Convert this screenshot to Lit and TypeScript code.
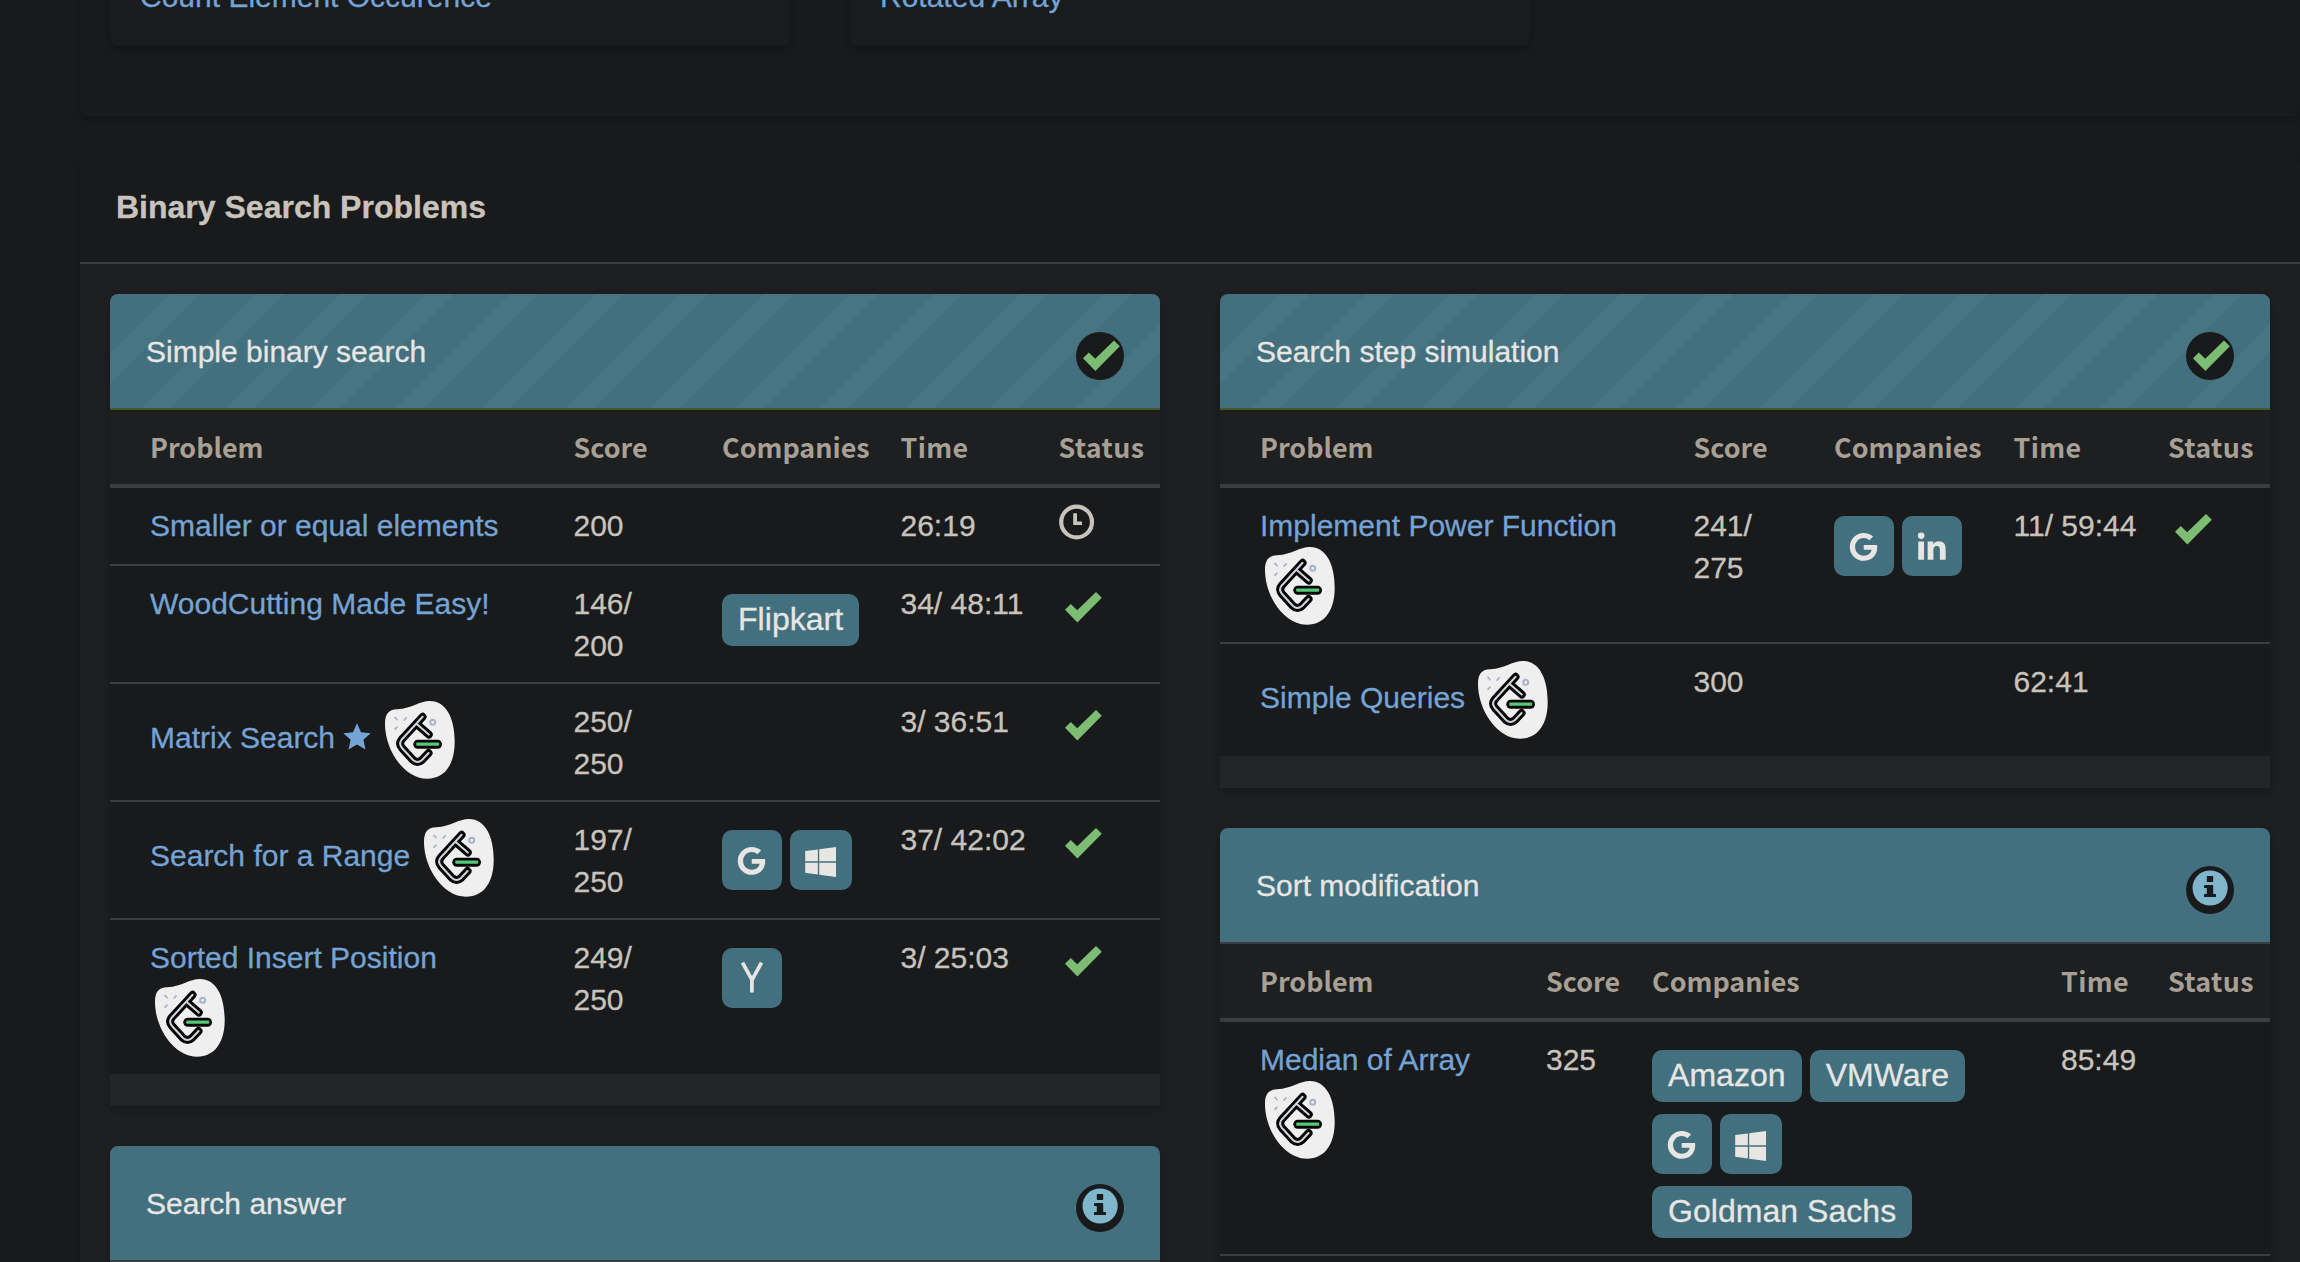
import { LitElement, html, svg, css, nothing } from "lit";
import { customElement, property } from "lit/decorators.js";
import { classMap } from "lit/directives/class-map.js";

type Status = "done" | "clock" | "";

interface Problem {
  name: string;
  star?: boolean;
  logo?: boolean;
  score: string;
  companies?: string[];
  time: string;
  status: Status;
}

interface Topic {
  title: string;
  complete: boolean;
  layout: "a" | "b" | "c";
  footer?: boolean;
  continues?: boolean;
  problems: Problem[];
}

const LEFT: Topic[] = [
  {
    title: "Simple binary search",
    complete: true,
    layout: "a",
    footer: true,
    problems: [
      { name: "Smaller or equal elements", score: "200", time: "26:19", status: "clock" },
      { name: "WoodCutting Made Easy!", score: "146/ 200", companies: ["Flipkart"], time: "34/ 48:11", status: "done" },
      { name: "Matrix Search", star: true, logo: true, score: "250/ 250", time: "3/ 36:51", status: "done" },
      { name: "Search for a Range", logo: true, score: "197/ 250", companies: ["@google", "@windows"], time: "37/ 42:02", status: "done" },
      { name: "Sorted Insert Position", logo: true, score: "249/ 250", companies: ["@ycomb"], time: "3/ 25:03", status: "done" },
    ],
  },
  { title: "Search answer", complete: false, layout: "a", problems: [] },
];

const RIGHT: Topic[] = [
  {
    title: "Search step simulation",
    complete: true,
    layout: "b",
    footer: true,
    problems: [
      { name: "Implement Power Function", logo: true, score: "241/ 275", companies: ["@google", "@linkedin"], time: "11/ 59:44", status: "done" },
      { name: "Simple Queries", logo: true, score: "300", time: "62:41", status: "" },
    ],
  },
  {
    title: "Sort modification",
    complete: false,
    layout: "c",
    continues: true,
    problems: [
      { name: "Median of Array", logo: true, score: "325", companies: ["Amazon", "VMWare", "@google", "@windows", "Goldman Sachs"], time: "85:49", status: "" },
    ],
  },
];

const TICK = "0,17.8 5.8,12 12.2,18.2 31,0 36.8,5.8 12.4,30.4";

const BRANDS: Record<string, unknown> = {
  "@google": svg`<path transform="translate(15.8 16.5) scale(.0562)" d="M488 261.8C488 403.3 391.1 504 248 504 110.8 504 0 393.2 0 256S110.8 8 248 8c66.8 0 123 24.5 166.3 64.9l-67.5 64.9C258.5 52.6 94.3 116.6 94.3 256c0 86.5 69.1 156.6 153.7 156.6 98.2 0 135-70.4 140.8-106.9H248v-85.3h236.1c2.3 12.7 3.9 24.9 3.9 41.4z"/>`,
  "@windows": svg`<path transform="translate(15.2 14.8) scale(.0688 .067)" d="M0 93.7l183.6-25.3v177.4H0V93.7zm0 324.6l183.6 25.3V268.4H0v149.9zm203.8 28L448 480V268.4H203.8v177.9zm0-380.6v180.1H448V32L203.8 65.7z"/>`,
  "@linkedin": svg`<path transform="translate(15.8 16.6) scale(.0622 .0605)" d="M100.28 448H7.4V148.9h92.88zM53.79 108.1C24.09 108.1 0 83.5 0 53.8a53.79 53.79 0 0 1 107.58 0c0 29.7-24.1 54.3-53.79 54.3zM447.9 448h-92.68V302.4c0-34.7-.7-79.2-48.29-79.2-48.29 0-55.69 37.7-55.69 76.7V448h-92.78V148.9h89.08v40.8h1.3c12.4-23.5 42.69-48.3 87.88-48.3 94 0 111.28 61.9 111.28 142.3V448z"/>`,
  "@ycomb": svg`<path d="M20.5 14.6L30 31.8L39.5 14.6M29.9 31V44.4" fill="none" stroke="currentColor" stroke-width="3.7"/>`,
};

@customElement("topic-card")
export class TopicCard extends LitElement {
  @property({ attribute: false }) topic!: Topic;

  static styles = css`
    :host {
      display: block;
      border-radius: 8px 8px 0 0;
      background: #181a1b;
      box-shadow: 0 4px 8px rgba(0, 0, 0, 0.24);
    }
    .head {
      display: flex;
      justify-content: space-between;
      height: 114px;
      box-sizing: border-box;
      padding: 36.5px 36px 0;
      border-radius: 8px 8px 0 0;
      background: #42707f;
      color: #e8e6e3;
    }
    .head.complete {
      background: repeating-linear-gradient(-45deg, #42707f 0 40px, #487582 40px 60px);
    }
    .rule {
      height: 2px;
      background: #3b3d40;
    }
    .rule.complete {
      background: #47592b;
    }
    .badge {
      display: block;
      width: 48px;
      height: 48px;
      margin-top: 1.5px;
    }
    .cols {
      display: grid;
      padding-left: 40px;
    }
    .a {
      grid-template-columns: 423.5px 148.5px 178.5px 158px 1fr;
    }
    .b {
      grid-template-columns: 433.5px 140.5px 179.5px 154.5px 1fr;
    }
    .c {
      grid-template-columns: 286px 106px 409px 107px 1fr;
    }
    .labels {
      height: 74px;
      box-sizing: border-box;
      padding-top: 16px;
      background: #1d1f20;
      color: #a8a095;
      font: 700 26.9px/42px "Noto Sans CJK SC", sans-serif;
      -webkit-text-stroke: 0;
    }
    .labels span:last-child,
    .labels span:nth-child(4) {
      letter-spacing: 0.35px;
    }
    .thick {
      height: 4px;
      background: #3b3d40;
    }
    .row + .row {
      border-top: 2px solid #3b3d40;
    }
    .row {
      padding-top: 16px;
      padding-bottom: 16px;
    }
    .row.blank {
      height: 90px;
    }
    .name {
      padding: 1px 56px 0 0;
      color: #74a3d6;
    }
    .star {
      width: 28px;
      height: 27px;
      vertical-align: -2px;
    }
    .logo {
      width: 80px;
      height: 80px;
      margin-top: -1px;
      vertical-align: middle;
    }
    .score {
      margin-bottom: -1px;
      padding: 1px 38px 0 0;
    }
    .tags {
      display: flex;
      flex-wrap: wrap;
      align-content: flex-start;
      align-items: flex-start;
      gap: 12px 8px;
      padding: 12px 32px 0 0;
    }
    .tag {
      height: 52px;
      box-sizing: border-box;
      padding: 0 16px;
      border-radius: 10px;
      background: #42707f;
      color: #e8e6e3;
      font-size: 32px;
      line-height: 50px;
      letter-spacing: 0.04px;
      white-space: nowrap;
    }
    .tag.brand {
      width: 60px;
      height: 60px;
      padding: 0;
    }
    .tag.wide {
      width: 62px;
    }
    .tag svg {
      display: block;
      width: 100%;
      height: 100%;
      fill: currentColor;
    }
    .time {
      padding-top: 1px;
      white-space: nowrap;
    }
    .clock {
      display: block;
      width: 36px;
      height: 44px;
    }
    .tick {
      display: block;
      width: 37px;
      height: 31px;
      margin: 10.2px 0 0 6.6px;
    }
    .foot {
      height: 32px;
      background: #222425;
    }
  `;

  private badge(complete: boolean) {
    return html`<svg class="badge" viewBox="0 0 48 48">
      <circle cx="24" cy="24" r="24" fill="#181a1b" />
      ${complete
        ? svg`<polygon transform="translate(7 8.5)" points=${TICK} fill="#7dbd73"/>`
        : svg`<circle cx="24.1" cy="22" r="17.6" fill="#7fb6cb"/>
            <path fill="#181a1b" d="M21.5 10h5a.7.7 0 0 1 .7.7v4.6a.7.7 0 0 1-.7.7h-5a.7.7 0 0 1-.7-.7v-4.6a.7.7 0 0 1 .7-.7zM18.7 19h7.8a.7.7 0 0 1 .7.7V28h2.1a.7.7 0 0 1 .7.7v1.7a.7.7 0 0 1-.7.7H18.7a.7.7 0 0 1-.7-.7v-1.7a.7.7 0 0 1 .7-.7h2.1v-5.900h-2.1a.7.7 0 0 1-.7-.7v-1.400a.7.7 0 0 1 .7-.7z"/>`}
    </svg>`;
  }

  private logo() {
    const band = "M42.6 16.8L22 39.2Q18.2 43.6 22 48L33 60Q37.5 64 42 60L48.6 53M36.4 23.8L48.8 34.6";
    return html`<svg class="logo" viewBox="0 0 80 80" fill="none" stroke-linecap="round" stroke-linejoin="round">
      <path fill="#efeff0" d="M5 24C5 14 8.500 9.800 17 9.300C33 8.300 39 1 50 1C66 1 74.700 18 74.700 42C74.700 64 65 78.700 47 78.700C24 78.700 5 50 5 24Z" />
      <path d=${band} stroke="#050505" stroke-width="7.900" />
      <path d=${band} stroke="#cfd3db" stroke-width="2" />
      <rect x="33.300" y="39.700" width="28.700" height="9" rx="4.500" fill="#050505" />
      <rect x="36.200" y="42.600" width="23" height="3.200" rx="1" fill="#57c878" />
      <circle cx="52.700" cy="22.300" r="2.500" stroke="#a9b3c6" stroke-width="2" />
      <path d="M15 17.500L17 19.600M26.100 17.900L24.200 20M17 27.200L15.100 29.200" stroke="#a9b3c6" stroke-width="1.800" />
    </svg>`;
  }

  private star() {
    return html`&nbsp;<svg class="star" viewBox="0 0 28 27">
        <path fill="currentColor" d="M14 .3L18 9.200L27.700 10.200L20.400 16.700L22.500 26.400L14 21.500L5.500 26.400L7.600 16.700L.3 10.200L10 9.200Z" />
      </svg>`;
  }

  private status(s: Status) {
    if (s === "clock")
      return html`<svg class="clock" viewBox="0 0 36 44">
        <circle cx="17.600" cy="18" r="15.400" fill="none" stroke="#c8c3bc" stroke-width="4.200" />
        <path fill="#c8c3bc" d="M14.200 9.200h3.800v8.300h5v3.600h-8.800z" />
      </svg>`;
    if (s === "done")
      return html`<svg class="tick" viewBox="0 0 37 31"><polygon points=${TICK} fill="#7dbd73" /></svg>`;
    return nothing;
  }

  private tag(c: string) {
    return c.startsWith("@")
      ? html`<span class=${classMap({ tag: true, brand: true, wide: c === "@windows" })}>
          <svg viewBox=${c === "@windows" ? "0 0 62 60" : "0 0 60 60"}>${BRANDS[c]}</svg>
        </span>`
      : html`<span class="tag">${c}</span>`;
  }

  render() {
    const t = this.topic;
    return html`
      <div class=${classMap({ head: true, complete: t.complete })}>
        <span>${t.title}</span>${this.badge(t.complete)}
      </div>
      <div class=${classMap({ rule: true, complete: t.complete })}></div>
      ${t.problems.length
        ? html`<div class="cols labels ${t.layout}">
              <span>Problem</span><span>Score</span><span>Companies</span><span>Time</span><span>Status</span>
            </div>
            <div class="thick"></div>
            <div>
              ${t.problems.map(
                (p) => html`<div class="cols row ${t.layout}">
                  <div class="name">${p.name}${p.star ? this.star() : nothing}${p.logo ? html` ${this.logo()}` : nothing}</div>
                  <div class="score">${p.score}</div>
                  <div class=${p.companies ? "tags" : ""}>${(p.companies ?? []).map((c) => this.tag(c))}</div>
                  <div class="time">${p.time}</div>
                  <div>${this.status(p.status)}</div>
                </div>`
              )}
              ${t.continues ? html`<div class="row blank"></div>` : nothing}
            </div>`
        : nothing}
      ${t.footer ? html`<div class="foot"></div>` : nothing}
    `;
  }
}

@customElement("app-root")
export class AppRoot extends LitElement {
  static styles = css`
    :host {
      display: block;
      width: 2300px;
      height: 1262px;
      overflow: hidden;
      background: #181a1b;
      color: #c8c3bc;
      font: 30px/42px "Liberation Sans", Arial, sans-serif;
      -webkit-text-stroke: 0.3px currentColor;
    }
    .page {
      display: flex;
      flex-direction: column;
      gap: 40px;
      padding-left: 80px;
    }
    .panel {
      border-radius: 8px;
      background: #181a1b;
      box-shadow: 0 4px 8px rgba(0, 0, 0, 0.22);
    }
    .lessons {
      display: flex;
      gap: 60px;
      margin-top: -54px;
      padding: 0 30px 70px;
    }
    .lesson {
      width: 620px;
      padding: 30px 30px 28px;
      border-radius: 8px;
      background: #191b1c;
      color: #74a3d6;
      box-shadow: 0 4px 8px rgba(0, 0, 0, 0.24);
    }
    .title {
      height: 106px;
      box-sizing: border-box;
      margin: 0;
      padding: 30px 36px 0;
      border-radius: 8px 8px 0 0;
      color: #c8c3bc;
      font-size: 32px;
      font-weight: 700;
      line-height: 42px;
    }
    .body {
      display: grid;
      grid-template-columns: 1050px 1050px;
      gap: 60px;
      align-items: start;
      border-top: 2px solid #3b3d40;
      padding: 30px;
      background: #1d1f20;
    }
    .column {
      display: flex;
      flex-direction: column;
      gap: 40px;
    }
  `;

  render() {
    return html`<div class="page">
      <section class="panel lessons">
        <div class="lesson">Count Element Occurence</div>
        <div class="lesson">Rotated Array</div>
      </section>
      <section class="panel">
        <h2 class="title">Binary Search Problems</h2>
        <div class="body">
          <div class="column">${LEFT.map((t) => html`<topic-card .topic=${t}></topic-card>`)}</div>
          <div class="column">${RIGHT.map((t) => html`<topic-card .topic=${t}></topic-card>`)}</div>
        </div>
      </section>
    </div>`;
  }
}
